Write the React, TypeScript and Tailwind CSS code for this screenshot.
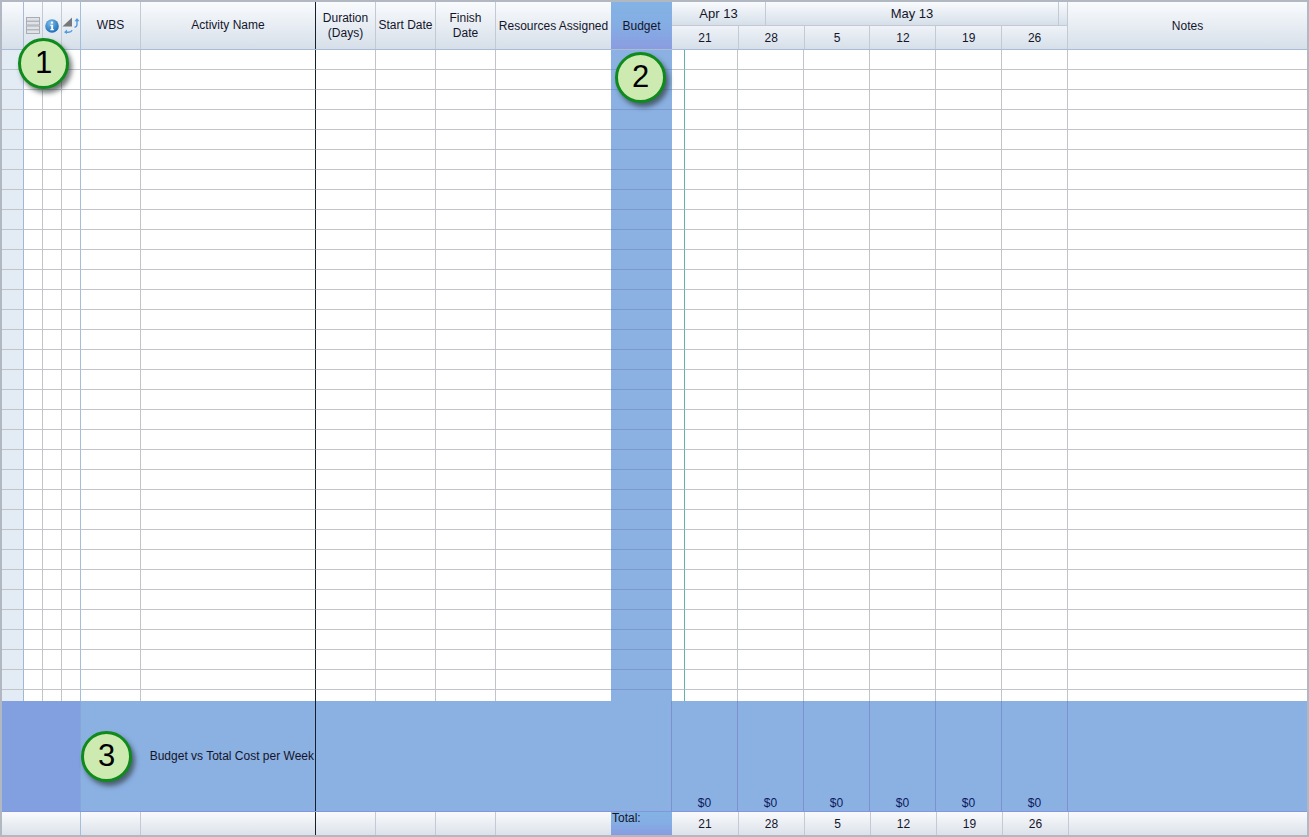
import React from "react";

const FONT = "font-['Liberation_Sans',Arial,sans-serif]";
const HEAD = "bg-gradient-to-b from-[#f9fbfd] to-[#d6dfe9]";
const FOOT = "bg-gradient-to-b from-[#f9fafc] to-[#dce2ea]";
const BUDGET = "bg-gradient-to-b from-[#83b3e4] via-[#84ade4] to-[#8a9ce0]";

const weeks = ["21", "28", "5", "12", "19", "26"];
const weekW = ["w-[67px]", "w-[66px]", "w-[66px]", "w-[66px]", "w-[66px]", "w-[66px]"];

function HeaderCell({ w, border = "border-[#c3cad3]", bg = HEAD, children }: { w: string; border?: string; bg?: string; children?: React.ReactNode }) {
  return (
    <div className={`${w} ${bg} ${border} shrink-0 h-full border-r border-b-0 flex items-center justify-center text-center leading-[15px]`}>
      {children}
    </div>
  );
}

function BodyRow({ last }: { last?: boolean }) {
  const b = last ? "" : "border-b";
  const g = `h-full border-r border-[#c1c4c8] ${b} shrink-0`;
  return (
    <div className={`flex ${last ? "h-[11px]" : "h-[20px]"}`}>
      <div className={`w-[22px] bg-[#e3ebf5] h-full shrink-0 border-r border-[#9fb8d6] ${b} border-b-[#c1c4c8]`} />
      <div className={`w-[19px] ${g}`} />
      <div className={`w-[19px] ${g}`} />
      <div className={`w-[19px] h-full shrink-0 border-r border-[#a3bedb] ${b} border-b-[#c1c4c8]`} />
      <div className={`w-[60px] ${g}`} />
      <div className={`w-[175px] h-full shrink-0 border-r border-[#16202c] ${b} border-b-[#c1c4c8]`} />
      <div className={`w-[60px] ${g}`} />
      <div className={`w-[60px] ${g}`} />
      <div className={`w-[60px] ${g}`} />
      <div className={`w-[115px] h-full shrink-0 ${b} border-[#c1c4c8]`} />
      <div className={`w-[61px] h-full shrink-0 bg-[#8ab1e2] ${b} border-[#7b98cf]`} />
      <div className={`w-[13px] h-full shrink-0 border-r border-[#62b2ac] ${b} border-b-[#c1c4c8]`} />
      <div className={`w-[53px] ${g}`} />
      <div className={`w-[66px] ${g}`} />
      <div className={`w-[66px] ${g}`} />
      <div className={`w-[66px] ${g}`} />
      <div className={`w-[66px] ${g}`} />
      <div className={`w-[66px] ${g}`} />
      <div className={`flex-1 h-full ${b} border-[#c1c4c8]`} />
    </div>
  );
}

function Badge({ n, className }: { n: string; className: string }) {
  return (
    <div className={`absolute ${className} w-[51px] h-[51px] rounded-full bg-[#cdeab0] border-[3px] border-[#0f8a1c] shadow-[3px_4px_5px_rgba(40,50,50,0.65)] flex items-center justify-center text-[31px] text-black`}>
      {n}
    </div>
  );
}

function RowsIcon() {
  return (
    <svg width="14" height="17" viewBox="0 0 14 17">
      <rect x="0.5" y="0.5" width="13" height="7.5" fill="#dfe3e8" stroke="#a9adb3" />
      <rect x="0.5" y="9" width="13" height="7.5" fill="#dfe3e8" stroke="#a9adb3" />
      <path d="M1 4.2h12M1 12.8h12" stroke="#9ea3a9" />
    </svg>
  );
}

function InfoIcon() {
  return (
    <svg width="14" height="14" viewBox="0 0 14 14">
      <defs>
        <radialGradient id="ib" cx="40%" cy="30%" r="75%">
          <stop offset="0" stopColor="#7dbdea" />
          <stop offset="1" stopColor="#1668b4" />
        </radialGradient>
      </defs>
      <circle cx="7" cy="7" r="6.8" fill="url(#ib)" />
      <rect x="5.9" y="2.6" width="2.2" height="2" fill="#fff" />
      <path d="M5.2 5.8h2.9v4.4h1v1H5.2v-1h1V6.8h-1z" fill="#fff" />
    </svg>
  );
}

function SwapIcon() {
  return (
    <svg width="18" height="17" viewBox="0 0 18 17">
      <path d="M10 0.5V9.5H0.5z" fill="#75777b" />
      <path d="M15 3v4.5c0 1.6-.8 2.5-2.5 2.8" fill="none" stroke="#4f9ae0" strokeWidth="1.4" />
      <path d="M12.5 4.2 15 1l2.5 3.2z" fill="#4f9ae0" />
      <path d="M4 15.2h2.5c2 0 3-.6 3.6-2" fill="none" stroke="#4f9ae0" strokeWidth="1.4" />
      <path d="M5 12.6 2 15.2l3 1.8z" fill="#4f9ae0" />
    </svg>
  );
}

export default function App() {
  return (
    <div className={`${FONT} relative w-[1309px] h-[837px] bg-white border-2 border-[#b1b8c1] text-[12px] text-[#14152a] overflow-hidden flex flex-col`}>
      {/* Header */}
      <div className="flex h-[48px] shrink-0 border-b border-[#a8bcd3]">
        <HeaderCell w="w-[22px]" border="border-[#a8bcd3]" />
        <HeaderCell w="w-[19px]"><RowsIcon /></HeaderCell>
        <HeaderCell w="w-[19px]"><InfoIcon /></HeaderCell>
        <HeaderCell w="w-[19px]" border="border-[#a3bedb]"><SwapIcon /></HeaderCell>
        <HeaderCell w="w-[60px]">WBS</HeaderCell>
        <HeaderCell w="w-[175px]" border="border-[#16202c]">Activity Name</HeaderCell>
        <HeaderCell w="w-[60px]"><span>Duration<br />(Days)</span></HeaderCell>
        <HeaderCell w="w-[60px]">Start Date</HeaderCell>
        <HeaderCell w="w-[60px]"><span>Finish<br />Date</span></HeaderCell>
        <div className={`w-[115px] shrink-0 h-full ${HEAD} flex items-center justify-center whitespace-nowrap`}>Resources Assigned</div>
        <div className={`w-[61px] shrink-0 h-full ${BUDGET} flex items-center justify-center`}>Budget</div>
        <div className="w-[396px] shrink-0 h-full flex flex-col">
          <div className={`h-[24px] flex border-b border-[#c3cad3] ${HEAD}`}>
            <div className="w-[94px] h-full border-r border-[#c3cad3] flex items-center justify-center text-[13px]">Apr 13</div>
            <div className="w-[293px] h-full border-r border-[#c3cad3] flex items-center justify-center text-[13px]">May 13</div>
            <div className="flex-1 h-full border-r border-[#c3cad3]" />
          </div>
          <div className="h-[23px] flex bg-gradient-to-b from-[#eff3f8] to-[#d6dfe9]">
            {weeks.map((t, i) => (
              <div key={i} className={`${weekW[i]} h-full border-r border-[#c3cad3] flex items-center justify-center`}>{t}</div>
            ))}
          </div>
        </div>
        <div className={`flex-1 h-full ${HEAD} flex items-center justify-center`}>Notes</div>
      </div>

      {/* Body rows */}
      <div className="h-[651px] shrink-0 flex flex-col">
        {Array.from({ length: 32 }).map((_, i) => (
          <BodyRow key={i} />
        ))}
        <BodyRow last />
      </div>

      {/* Budget vs total band */}
      <div className="flex h-[111px] shrink-0 bg-[#8bb0e2] border-b border-[#8593e2]">
        <div className="w-[79px] h-full shrink-0 bg-[#82a0e0] border-r border-[#86a7dc]" />
        <div className="w-[235px] h-full shrink-0 border-r border-[#16202c] flex items-center justify-end whitespace-nowrap pr-[1px]">
          Budget vs Total Cost per Week
        </div>
        <div className="w-[356px] h-full shrink-0 border-r border-[#7d90cf]" />
        {weeks.map((_, i) => (
          <div key={i} className={`${i === 0 ? "w-[66px]" : "w-[66px]"} h-full shrink-0 border-r border-[#7d90cf] flex items-end justify-center text-[#0c1a5e] leading-[14px] pb-px`}>
            $0
          </div>
        ))}
        <div className="flex-1 h-full" />
      </div>

      {/* Footer */}
      <div className={`flex flex-1 ${FOOT}`}>
        <div className="w-[22px] h-full shrink-0" />
        <div className="w-[57px] h-full shrink-0 border-r border-[#a3bedb]" />
        <div className="w-[60px] h-full shrink-0 border-r border-[#c3cad3]" />
        <div className="w-[175px] h-full shrink-0 border-r border-[#16202c]" />
        <div className="w-[60px] h-full shrink-0 border-r border-[#c3cad3]" />
        <div className="w-[60px] h-full shrink-0 border-r border-[#c3cad3]" />
        <div className="w-[60px] h-full shrink-0 border-r border-[#c3cad3]" />
        <div className="w-[115px] h-full shrink-0" />
        <div className={`w-[61px] h-full shrink-0 ${BUDGET} leading-[12px] pl-px`}>Total:</div>
        {weeks.map((t, i) => (
          <div key={i} className={`${weekW[i]} h-full shrink-0 border-r border-[#c3cad3] flex items-center justify-center`}>{t}</div>
        ))}
        <div className="flex-1 h-full" />
      </div>

      {/* Callouts */}
      <Badge n="1" className="left-[16px] top-[36px]" />
      <Badge n="2" className="left-[613px] top-[50px]" />
      <Badge n="3" className="left-[79px] top-[729px]" />
    </div>
  );
}
